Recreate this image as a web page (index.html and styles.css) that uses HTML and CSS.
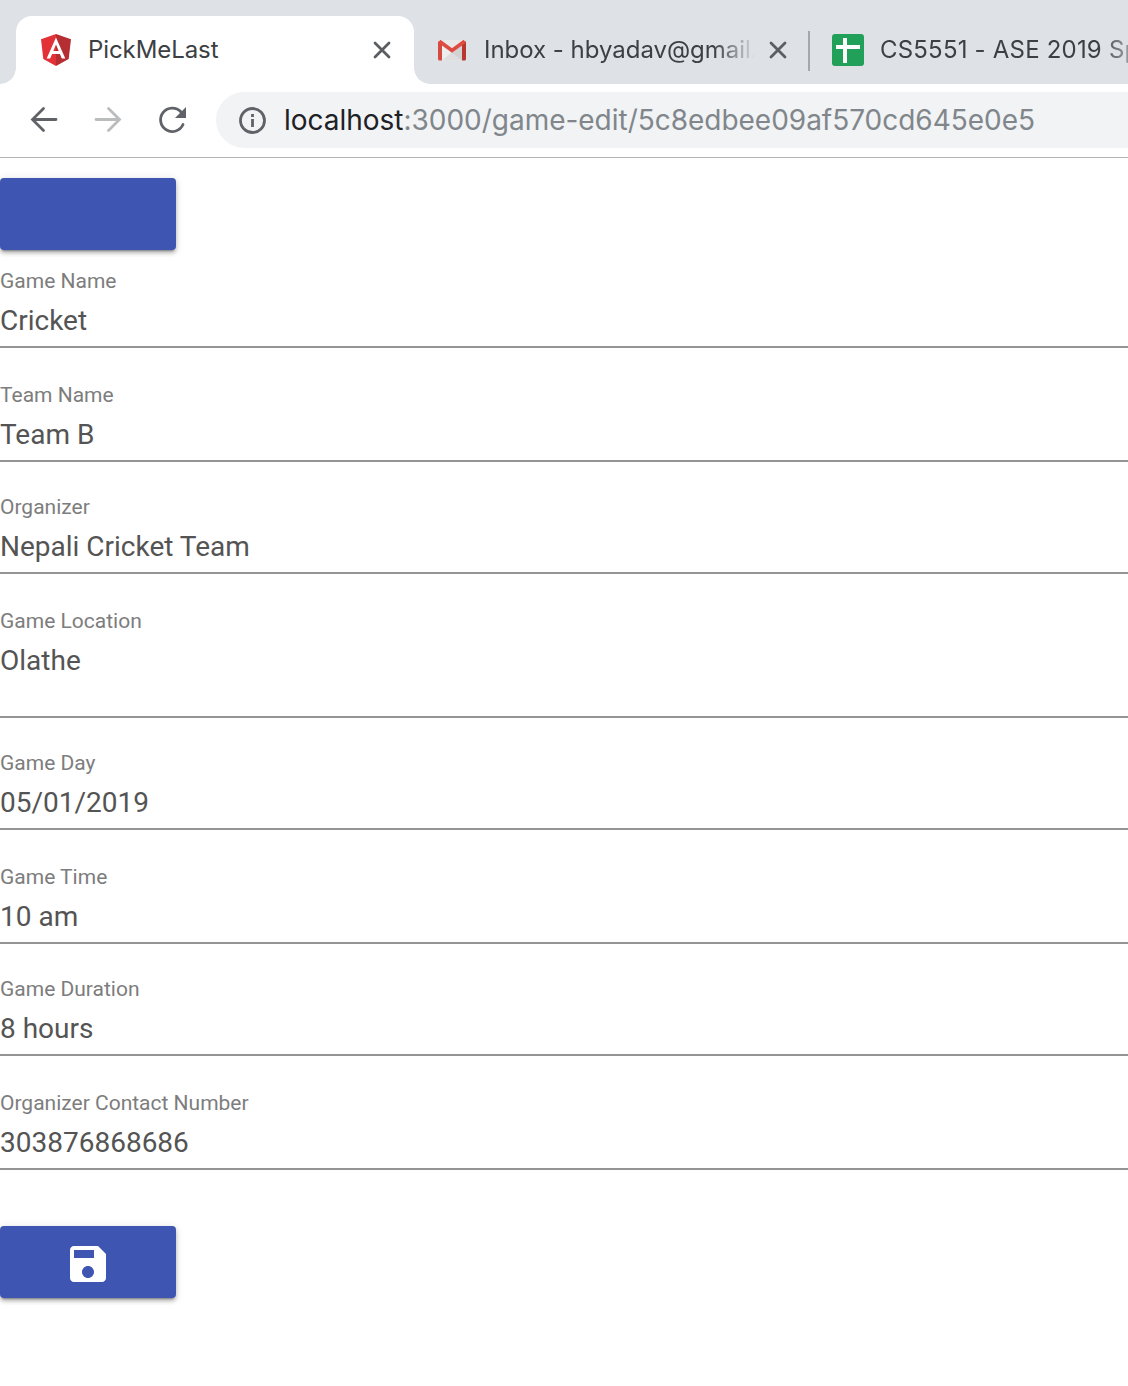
FILE: index.html
```html
<!DOCTYPE html>
<html lang="en">
<head>
<meta charset="utf-8">
<title>PickMeLast</title>
<link rel="stylesheet" href="styles.css">
</head>
<body>
<header class="tabs">
  <div class="tab tab-active">
    <svg class="favicon" width="32" height="32" viewBox="0 0 32 32"><path fill="#e23237" d="M16 0 1 5.300 3.300 25 16 32z"/><path fill="#b52e31" d="M16 0 31 5.300 28.700 25 16 32z"/><path fill="#fff" fill-rule="evenodd" d="M16 3.600 6.700 24.600h3.500l1.900-4.700h7.800l1.900 4.700h3.500zM16 10.400l2.700 6.600h-5.400z"/></svg>
    <span class="tab-title title-app">PickMeLast</span>
    <svg class="close" width="18" height="18" viewBox="0 0 18 18"><path d="M2 2 16 16M16 2 2 16"/></svg>
  </div>
  <div class="tab tab-mail">
    <svg class="favicon" width="28" height="32" viewBox="0 0 28 32"><path fill="#eee" d="M2 6h24v20.500H2z"/><path fill="#dedede" d="M4 26.500 14 18l10 8.500z"/><path fill="#d2d2d2" d="M4 11l20 15.500V11L14 19z"/><path fill="#e8e8e8" d="M3 6h22L14 14z"/><path fill="#d54b3f" d="M0 7.500h4v19H1.500Q0 26.500 0 25z"/><path fill="#b63831" d="M24 7.500h4V25q0 1.500-1.500 1.500H24z"/><path fill="none" stroke="#de4b40" stroke-width="3.800" stroke-linejoin="miter" d="M1.300 7.300 14 16.500 26.700 7.300"/></svg>
    <span class="tab-title title-mail">Inbox - hbyadav@gmail.</span>
    <svg class="close" width="18" height="18" viewBox="0 0 18 18"><path d="M2 2 16 16M16 2 2 16"/></svg>
  </div>
  <div class="tab tab-sheet">
    <svg class="favicon" width="32" height="32" viewBox="0 0 32 32"><rect width="32" height="32" rx="3" fill="#21a05a"/><path fill="#fff" d="M11 4h4v7h13v4H15v14h-4V15H4v-4h7z"/></svg>
    <span class="tab-title title-sheet">CS5551 - ASE 2019 Sp</span>
  </div>
</header>
<nav class="toolbar">
  <svg class="nav-icon" width="28" height="28" viewBox="0 0 28 28"><path d="M26 13.500H3M13.500 2.500 2.500 13.500l11 11"/></svg>
  <svg class="nav-icon nav-disabled" width="28" height="28" viewBox="0 0 28 28"><path d="M2 13.500h23M14.500 2.500 25.500 13.500l-11 11"/></svg>
  <svg class="nav-icon nav-reload" width="28" height="28" viewBox="0 0 28 28"><path d="M25 18.500A11.700 11.700 0 1 1 22.800 5.800"/><path class="solid" d="M28 1v11H17z"/></svg>
  <div class="address">
    <svg class="info" width="28" height="28" viewBox="0 0 28 28"><circle cx="14.500" cy="14.500" r="12"/><path d="M14.500 13V21M14.500 8v3"/></svg>
    <span class="url"><b>localhost</b>:3000/game-edit/5c8edbee09af570cd645e0e5</span>
  </div>
</nav>
<main class="page">
  <button class="button" type="button" aria-label="List"></button>
  <form class="form">
    <div class="field field-first"><span class="label">Game Name</span><span class="value">Cricket</span></div>
    <div class="field field-tall"><span class="label">Team Name</span><span class="value">Team B</span></div>
    <div class="field"><span class="label">Organizer</span><span class="value">Nepali Cricket Team</span></div>
    <div class="field field-area"><span class="label">Game Location</span><span class="value">Olathe</span></div>
    <div class="field"><span class="label">Game Day</span><span class="value">05/01/2019</span></div>
    <div class="field field-tall"><span class="label">Game Time</span><span class="value">10 am</span></div>
    <div class="field"><span class="label">Game Duration</span><span class="value">8 hours</span></div>
    <div class="field field-tall"><span class="label">Organizer Contact Number</span><span class="value">303876868686</span></div>
    <button class="button button-save" type="button" aria-label="Save"><svg width="48" height="48" viewBox="0 0 24 24"><path fill="#fff" d="M17 3H5c-1.110 0-2 .9-2 2v14c0 1.100.89 2 2 2h14c1.100 0 2-.9 2-2V7l-4-4zm-5 16c-1.660 0-3-1.340-3-3s1.340-3 3-3 3 1.340 3 3-1.340 3-3 3zm3-10H5V5h10v4z"/></svg></button>
  </form>
</main>
</body>
</html>
```
FILE: styles.css
```css
* { box-sizing: border-box; }
body {
  margin: 0;
  min-height: 1386px;
  overflow-x: hidden;
  background: #fff;
  font-family: Roboto, "Liberation Sans", sans-serif;
}
svg { display: block; flex: none; overflow: visible; }

.tabs {
  display: flex;
  height: 84px;
  padding: 16px 0 0 16px;
  overflow: hidden;
  background: #dee1e6;
  font-family: Inter, "Liberation Sans", sans-serif;
}
.tab { display: flex; align-items: center; flex: none; height: 68px; }
.tab-active {
  position: relative;
  width: 398px;
  padding: 0 23px 0 24px;
  border-radius: 16px 16px 0 0;
  background: #fff;
}
.tab-active::before, .tab-active::after {
  content: "";
  position: absolute;
  bottom: 0;
  width: 16px;
  height: 16px;
}
.tab-active::before { left: -16px; background: radial-gradient(circle at 0 0, transparent 15.500px, #fff 16px); }
.tab-active::after { right: -16px; background: radial-gradient(circle at 100% 0, transparent 15.500px, #fff 16px); }
.tab-mail { position: relative; width: 396px; padding: 0 23px 0 24px; }
.tab-mail::after {
  content: "";
  position: absolute;
  right: 0;
  top: 15px;
  width: 2px;
  height: 40px;
  background: #a3a6aa;
}
.tab-sheet { width: 296px; padding-left: 22px; }
.tab-title {
  margin-left: 16px;
  white-space: nowrap;
  font-size: 24px;
  line-height: 34px;
  color: #3c4043;
}
.title-app { letter-spacing: -0.080px; }
.title-mail { width: 270px; margin-left: 18px; letter-spacing: -0.030px; -webkit-mask-image: linear-gradient(90deg, #000 230px, transparent 272px); mask-image: linear-gradient(90deg, #000 230px, transparent 272px); }
.title-sheet { letter-spacing: 0.200px; -webkit-mask-image: linear-gradient(90deg, #000 218px, transparent 272px); mask-image: linear-gradient(90deg, #000 218px, transparent 272px); }
.close { margin-left: auto; }
.close path { fill: none; stroke: #5a5e62; stroke-width: 2.800; stroke-linecap: round; }

.toolbar {
  display: flex;
  align-items: center;
  gap: 36px;
  height: 74px;
  padding: 0 0 2px 30px;
  border-bottom: 1px solid #b2b4b6;
}
.nav-icon path { fill: none; stroke: #5f6368; stroke-width: 2.800; stroke-linecap: round; stroke-linejoin: miter; }
.nav-icon .solid { fill: #5f6368; stroke: none; }
.nav-disabled path { stroke: #babcbe; }
.address {
  display: flex;
  align-items: center;
  flex: 1;
  height: 56px;
  margin-left: -6px;
  padding-left: 22px;
  border-radius: 28px 0 0 28px;
  background: #f1f3f4;
}
.info { fill: none; stroke: #5f6368; stroke-width: 2.800; }
.url {
  margin-left: 18px;
  white-space: nowrap;
  font: 28px/40px Inter, "Liberation Sans", sans-serif;
  letter-spacing: -0.020px;
  color: #80868b;
}
.url b { font-weight: 400; color: #202124; }

.page { padding-top: 20px; }
.button {
  display: flex;
  align-items: center;
  justify-content: center;
  width: 176px;
  height: 72px;
  padding: 0;
  border: 0;
  border-radius: 4px;
  background: #3f55b2;
  box-shadow: 0 3px 2px -2px rgba(0, 0, 0, .3), 0 3px 4px rgba(0, 0, 0, .24), 0 1px 8px rgba(0, 0, 0, .12);
}
.button svg { margin-top: 4px; }
.field {
  display: flex;
  flex-direction: column;
  justify-content: flex-end;
  height: 112px;
  padding-bottom: 9px;
  border-bottom: 2px solid #949494;
}
.field-first { height: 98px; }
.field-tall { height: 114px; }
.field-area { height: 144px; padding-bottom: 39px; }
.label { margin-bottom: 12px; font-size: 21px; line-height: 24px; color: #7d7d7d; }
.value { font-size: 28px; line-height: 32px; color: #545454; }
.button-save { margin-top: 56px; }
```
